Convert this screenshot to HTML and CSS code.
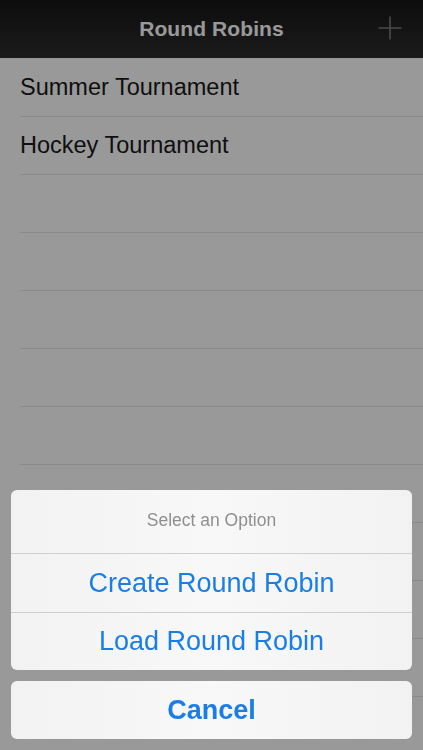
FILE: index.html
```html
<!DOCTYPE html>
<html>
<head>
<meta charset="utf-8">
<link rel="stylesheet" href="styles.css">
</head>
<body>
<div class="app">
  <header class="nav">
    <div class="nav-side"></div>
    <h1 class="nav-title">Round Robins</h1>
    <div class="nav-side nav-right">
      <svg class="plus" width="26" height="26" viewBox="0 0 26 26"><path d="M13 1.5V24.5M1.5 13H24.5" stroke="currentColor" stroke-width="1.6" fill="none"/></svg>
    </div>
  </header>
  <ul class="list">
    <li class="row">Summer Tournament</li>
    <li class="row">Hockey Tournament</li>
    <li class="row"></li>
    <li class="row"></li>
    <li class="row"></li>
    <li class="row"></li>
    <li class="row"></li>
    <li class="row"></li>
    <li class="row"></li>
    <li class="row"></li>
    <li class="row"></li>
    <li class="row"></li>
  </ul>
</div>
<div class="overlay">
  <div class="sheet">
    <div class="group">
      <div class="sheet-title">Select an Option</div>
      <div class="sheet-btn">Create Round Robin</div>
      <div class="sheet-btn">Load Round Robin</div>
    </div>
    <div class="group">
      <div class="sheet-btn cancel">Cancel</div>
    </div>
  </div>
</div>
</body>
</html>
```
FILE: styles.css
```css
html, body {
  margin: 0;
  padding: 0;
  width: 423px;
  height: 750px;
  overflow: hidden;
  font-family: "Liberation Sans", Arial, sans-serif;
}
.app {
  width: 423px;
  height: 750px;
  background: #ffffff;
  display: flex;
  flex-direction: column;
}
.nav {
  height: 59px;
  flex: none;
  display: flex;
  align-items: center;
  background: linear-gradient(#161616, #2e2e2e);
  border-bottom: 1px solid #fafafa;
  box-sizing: border-box;
}
.nav-side {
  width: 60px;
  display: flex;
  align-items: center;
  justify-content: flex-end;
}
.nav-right {
  padding-right: 20px;
  box-sizing: border-box;
}
.plus {
  color: #7e7e7e;
  display: block;
  margin-top: -2px;
}
.nav-title {
  flex: 1;
  margin: 0;
  text-align: center;
  font-size: 21px;
  font-weight: bold;
  color: #ffffff;
  letter-spacing: 0.1px;
  padding-bottom: 1px;
}
.list {
  list-style: none;
  margin: 0;
  padding: 0 0 0 20px;
}
.row {
  height: 58px;
  box-sizing: border-box;
  border-bottom: 1px solid #e6e6e6;
  display: flex;
  align-items: center;
  font-size: 23.5px;
  color: #1a1a1a;
  padding-bottom: 1px;
}
.overlay {
  position: fixed;
  inset: 0;
  background: rgba(0, 0, 0, 0.4);
  display: flex;
  flex-direction: column;
  justify-content: flex-end;
}
.sheet {
  padding: 0 11px 11px 11px;
  display: flex;
  flex-direction: column;
  gap: 11px;
}
.group {
  background: linear-gradient(90deg, #f2f2f2, #f8f8f8 50%, #f2f2f2);
  border-radius: 6px;
  overflow: hidden;
}
.sheet-title {
  height: 64px;
  display: flex;
  align-items: center;
  justify-content: center;
  font-size: 17.5px;
  color: #8f8f8f;
  border-bottom: 1px solid #cfcfcf;
  box-sizing: border-box;
  padding-bottom: 3px;
}
.sheet-btn {
  height: 58px;
  display: flex;
  align-items: center;
  justify-content: center;
  font-size: 27px;
  color: #1a7ee8;
  box-sizing: border-box;
}
.sheet-btn + .sheet-btn {
  border-top: 1px solid #cfcfcf;
}
.cancel {
  font-weight: bold;
  font-size: 27px;
}
```
